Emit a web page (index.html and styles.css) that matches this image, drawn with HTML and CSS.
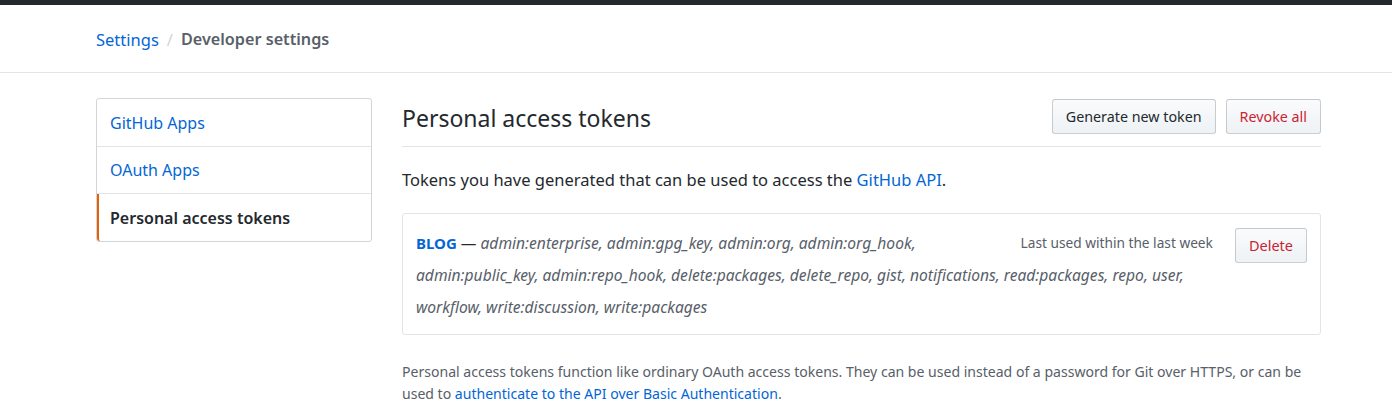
FILE: index.html
```html
<!DOCTYPE html>
<html lang="en">
<head>
<meta charset="utf-8">
<title>Personal access tokens</title>
<link rel="stylesheet" href="styles.css">
</head>
<body>
<div class="topbar"></div>
<header class="pagehead">
  <nav class="breadcrumb">
    <a class="crumb-link" href="#">Settings</a>
    <span class="crumb-sep">/</span>
    <strong class="crumb-current">Developer settings</strong>
  </nav>
</header>
<div class="layout">
  <nav class="menu">
    <a class="menu-item" href="#">GitHub Apps</a>
    <a class="menu-item" href="#">OAuth Apps</a>
    <a class="menu-item selected" href="#">Personal access tokens</a>
  </nav>
  <main class="main">
    <div class="subhead">
      <h2 class="subhead-title">Personal access tokens</h2>
      <div class="subhead-actions">
        <a class="btn" href="#">Generate new token</a>
        <a class="btn btn-danger" href="#">Revoke all</a>
      </div>
    </div>
    <p class="lead">Tokens you have generated that can be used to access the <a href="#">GitHub API</a>.</p>
    <div class="token-box">
      <a class="btn btn-danger btn-delete" href="#">Delete</a>
      <span class="last-used">Last used within the last week</span>
      <p class="token-desc"><a class="token-name" href="#">BLOG</a> — <em class="scopes">admin:enterprise, admin:gpg_key, admin:org, admin:org_hook, admin:public_key, admin:repo_hook, delete:packages, delete_repo, gist, notifications, read:packages, repo, user, workflow, write:discussion, write:packages</em></p>
    </div>
    <p class="note">Personal access tokens function like ordinary OAuth access tokens. They can be used instead of a password for Git over HTTPS, or can be used to <a href="#">authenticate to the API over Basic Authentication</a>.</p>
  </main>
</div>
</body>
</html>
```

FILE: styles.css
```css
* { box-sizing: border-box; }
body {
  margin: 0;
  font-family: "Noto Sans", "Open Sans", sans-serif;
  color: #24292e;
  background: #fff;
  overflow: hidden;
}
a { color: #0366d6; text-decoration: none; }

.topbar { height: 5px; background: #24292e; }

.pagehead {
  border-bottom: 1px solid #e1e4e8;
  padding: 21px 0 19px 96px;
}
.breadcrumb { font-size: 16.5px; line-height: 27px; display: flex; gap: 8px; }
.crumb-sep { color: #d1d5da; }
.crumb-current { color: #586069; font-weight: 600; font-size: 16.2px; }

.layout {
  display: flex;
  padding: 25px 0 0 96px;
  width: 1321px;
}
.menu {
  width: 276px;
  flex: none;
  align-self: flex-start;
  border: 1px solid #d1d5da;
  border-radius: 3px;
  display: flex;
  flex-direction: column;
}
.menu-item {
  font-size: 16px;
  line-height: 22px;
  padding: 12.5px 13px 12px;
  border-bottom: 1px solid #e1e4e8;
}
.menu-item:last-child { border-bottom: 0; }
.menu-item.selected {
  color: #24292e;
  font-weight: 600;
  border-left: 2px solid #e36209;
  padding-left: 11px;
  border-radius: 0 0 0 3px;
}

.main { flex: 1; margin-left: 30px; }
.subhead {
  display: flex;
  align-items: flex-start;
  justify-content: space-between;
  padding-bottom: 10px;
  border-bottom: 1px solid #e1e4e8;
}
.subhead-title {
  margin: 0;
  padding-top: 2px;
  font-size: 23px;
  font-weight: 400;
  line-height: 36px;
}
.subhead-actions { display: flex; gap: 10px; margin-top: 1px; }

.btn {
  display: inline-block;
  font-size: 14.3px;
  line-height: 21px;
  padding: 6px 13px;
  color: #24292e;
  background: linear-gradient(180deg, #fafbfc, #eff3f6 90%);
  border: 1px solid rgba(27, 31, 35, 0.2);
  border-radius: 3px;
  white-space: nowrap;
}
.btn-danger { color: #cb2431; }

.lead { font-size: 16.5px; line-height: 24px; margin: 21px 0 21px; }

.token-box {
  border: 1px solid #e1e4e8;
  border-radius: 3px;
  padding: 13px 13px 11px;
}
.btn-delete { float: right; margin: 1px 0 0 22px; font-size: 14.5px; padding: 6px 13px; }
.last-used {
  float: right;
  font-size: 13.7px;
  line-height: 32px;
  color: #586069;
}
.token-desc { margin: 0; font-size: 15.6px; line-height: 32px; }
.token-name { font-weight: 700; font-size: 15px; }
.scopes { color: #586069; }

.note {
  font-size: 14.05px;
  line-height: 22px;
  color: #586069;
  margin: 26px 0 0;
}
```
